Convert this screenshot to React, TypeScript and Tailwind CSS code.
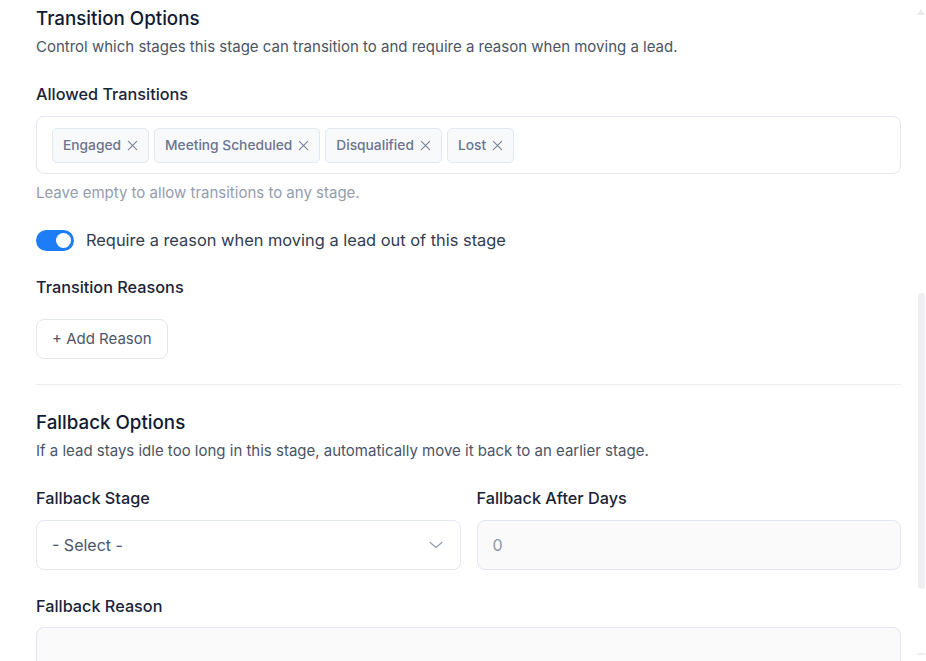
import React from "react";

const tags = ["Engaged", "Meeting Scheduled", "Disqualified", "Lost"];

function Tag({ label }: { label: string }) {
  return (
    <span className="flex h-[35px] items-center gap-[6px] rounded-[5px] border border-[#e2e8f0] bg-[#f8f9fa] pl-[10px] pr-[10px] text-[13.75px] font-medium text-[#6b7490]">
      <span>{label}</span>
      <svg width="11" height="11" viewBox="0 0 12 12" fill="none" stroke="#7d8599" strokeWidth="1.3" strokeLinecap="round">
        <path d="M1.5 1.5 10.5 10.5M10.5 1.5 1.5 10.5" />
      </svg>
    </span>
  );
}

function Label({ children }: { children: React.ReactNode }) {
  return <div className="text-[16.25px] font-medium leading-[24px] text-[#1b2337]">{children}</div>;
}

export default function App() {
  return (
    <div
      className="relative h-[661px] w-[926px] overflow-hidden bg-white"
      style={{ fontFamily: "Inter, 'Noto Sans', sans-serif" }}
    >
      <div className="flex flex-col pl-[36px] pr-[25px] pt-[5px]">
        {/* Transition options */}
        <h2 className="text-[18.75px] font-medium leading-[28px] text-[#111a33]">Transition Options</h2>
        <p className="mt-[4px] text-[15px] leading-[20px] text-[#4b5565]">
          Control which stages this stage can transition to and require a reason when moving a lead.
        </p>

        <div className="mt-[25px]">
          <Label>Allowed Transitions</Label>
        </div>
        <div className="mt-[10px] flex h-[58px] items-center gap-[5px] rounded-[8px] border border-[#e2e6ee] px-[15px]">
          {tags.map((t) => (
            <Tag key={t} label={t} />
          ))}
        </div>
        <p className="mt-[9px] text-[15px] leading-[20px] text-[#959cad]">
          Leave empty to allow transitions to any stage.
        </p>

        <div className="mt-[25px] flex h-[24px] items-center gap-[12px]">
          <span className="flex h-[21px] w-[38px] items-center justify-end rounded-full bg-[#1d7df6] pr-[3px]">
            <span className="h-[15px] w-[15px] rounded-full bg-white" />
          </span>
          <span className="text-[16.4px] leading-[24px] text-[#333b4f]">
            Require a reason when moving a lead out of this stage
          </span>
        </div>

        <div className="mt-[23px]">
          <Label>Transition Reasons</Label>
        </div>
        <div className="mt-[20px] flex">
          <button className="flex h-[40px] items-center rounded-[8px] border border-[#e2e6ee] bg-white px-[15px] text-[15px] text-[#4d566c]">
            + Add Reason
          </button>
        </div>

        <div className="mt-[25px] h-px bg-[#eceef2]" />

        {/* Fallback options */}
        <h2 className="mt-[24px] text-[18.75px] font-medium leading-[28px] text-[#111a33]">Fallback Options</h2>
        <p className="mt-[4px] text-[15px] leading-[20px] text-[#4b5565]">
          If a lead stays idle too long in this stage, automatically move it back to an earlier stage.
        </p>

        <div className="mt-[25px] grid grid-cols-2 gap-x-[16px]">
          <div className="flex flex-col">
            <Label>Fallback Stage</Label>
            <div className="mt-[10px] flex h-[50px] items-center justify-between rounded-[8px] border border-[#e2e6ee] bg-white pl-[15px] pr-[14px]">
              <span className="text-[16px] text-[#4d566c]">- Select -</span>
              <svg width="20" height="20" viewBox="0 0 24 24" fill="none" stroke="#9aa1b3" strokeWidth="1.6" strokeLinecap="round" strokeLinejoin="round">
                <path d="m5 9 7 6 7-6" />
              </svg>
            </div>
          </div>
          <div className="flex flex-col">
            <Label>Fallback After Days</Label>
            <div className="mt-[10px] flex h-[50px] items-center rounded-[8px] border border-[#e2e6ee] bg-[#fafafa] px-[15px]">
              <span className="text-[16px] text-[#8e96aa]">0</span>
            </div>
          </div>
        </div>

        <div className="mt-[24px]">
          <Label>Fallback Reason</Label>
        </div>
        <div className="mt-[9px] h-[80px] rounded-[8px] border border-[#e2e6ee] bg-[#fafafa]" />
      </div>

      {/* scrollbar */}
      <div className="absolute right-[1px] top-0 flex h-full w-[8px] flex-col items-center">
        <svg className="mt-[9px]" width="8" height="6" viewBox="0 0 8 6">
          <path d="M4 0 L8 6 L0 6 Z" fill="#ececef" />
        </svg>
        <div className="mt-[278px] h-[296px] w-[7px] rounded-full bg-[#efeff2]" />
        <div className="mt-[64px] h-[2px] w-[8px] bg-[#efeff2]" />
      </div>
    </div>
  );
}
